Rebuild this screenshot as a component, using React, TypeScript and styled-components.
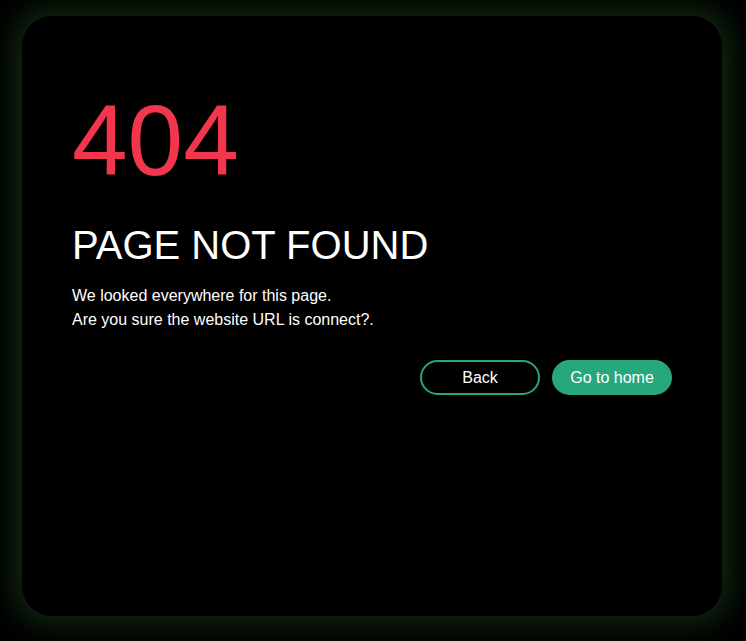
import styled, { createGlobalStyle } from 'styled-components';

const GlobalStyle = createGlobalStyle`
  html, body {
    margin: 0;
    background: #000;
    font-family: "Liberation Sans", Arial, sans-serif;
  }
`;

export default function App() {
  return (
    <>
      <GlobalStyle />
      <Page>
        <Card>
          <Code>404</Code>
          <Title>PAGE NOT FOUND</Title>
          <Text>
            We looked everywhere for this page.
            <br />
            Are you sure the website URL is connect?.
          </Text>
          <Actions>
            <Button variant="outline">Back</Button>
            <Button variant="solid">Go to home</Button>
          </Actions>
        </Card>
      </Page>
    </>
  );
}

const Page = styled.div`
  display: flex;
  padding: 16px 0 0 22px;
  height: 641px;
  box-sizing: border-box;
`;

const Card = styled.div`
  box-sizing: border-box;
  width: 700px;
  height: 600px;
  padding: 67px 50px 60px;
  background: #000;
  border-radius: 30px;
  box-shadow: 0 0 28px 9px #102810;
  display: flex;
  flex-direction: column;
`;

const Code = styled.h1`
  margin: 0;
  font-size: 100px;
  font-weight: normal;
  color: #f2364c;
`;

const Title = styled.h2`
  margin: 25px 0 0;
  font-size: 40px;
  font-weight: normal;
  color: #fff;
`;

const Text = styled.p`
  margin: 16px 0 0;
  font-size: 16px;
  line-height: 24px;
  color: #fff;
`;

const Actions = styled.div`
  display: flex;
  justify-content: flex-end;
  gap: 12px;
  margin-top: 28px;
`;

const Button = styled.button<{ variant: 'outline' | 'solid' }>`
  width: 120px;
  height: 35px;
  border-radius: 18px;
  font-family: "Liberation Sans", Arial, sans-serif;
  font-size: 16px;
  color: #fff;
  cursor: pointer;
  border: 2px solid #27a87c;
  background: ${(p) => (p.variant === 'solid' ? '#27a87c' : 'transparent')};
`;
